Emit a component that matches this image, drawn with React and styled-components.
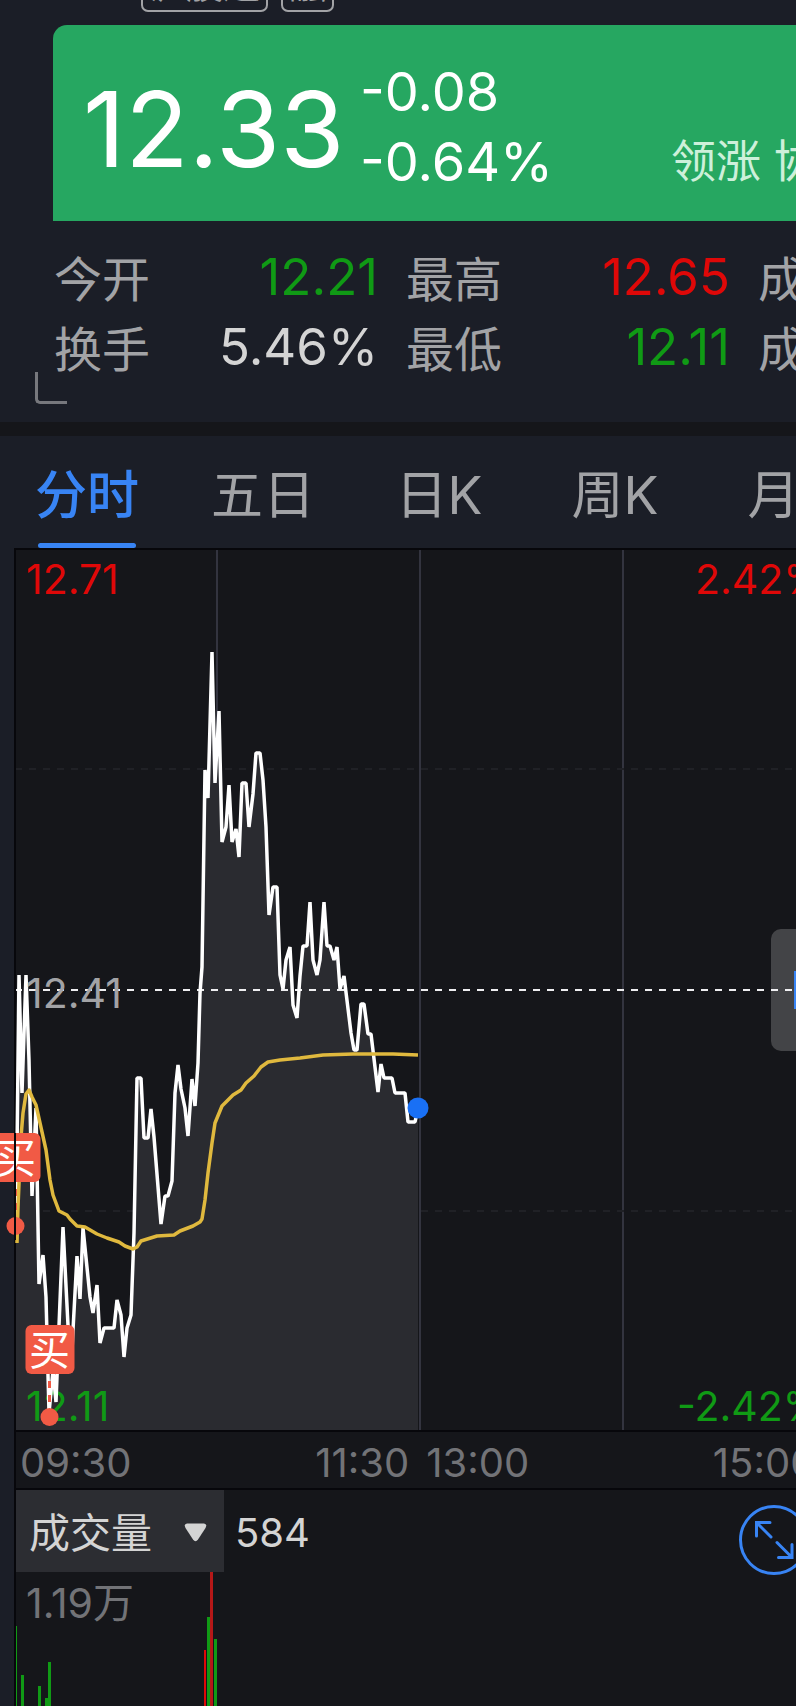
import React from 'react';
import styled, { createGlobalStyle } from 'styled-components';

const GlobalStyle = createGlobalStyle`
  *, *::before, *::after { box-sizing: border-box; }
  body {
    margin: 0;
    background: #1b1e27;
    color: #a2a3a6;
    font-family: Inter, "Noto Sans CJK SC", sans-serif;
    overflow-x: hidden;
  }
  button, select { font: inherit; color: inherit; border: 0; background: none; padding: 0; }
`;

const Page = styled.main`
  width: 100%;
  overflow: hidden;
`;

const TagRow = styled.div`
  display: flex;
  align-items: flex-end;
  gap: 13px;
  height: 12px;
  padding-left: 141px;
  overflow: hidden;
`;

const Tag = styled.span`
  flex: none;
  padding: 0 6px 6px;
  border: 2px solid #a2a3a6;
  border-radius: 7px;
  font-size: 37px;
  line-height: 36px;
`;

const Banner = styled.section`
  display: flex;
  align-items: center;
  height: 196px;
  margin: 13px 0 0 53px;
  padding: 8px 0 0 30px;
  border-top-left-radius: 14px;
  background: #26a761;
  color: #fff;
  overflow: hidden;
  white-space: nowrap;
`;

const Price = styled.strong`
  flex: none;
  width: 277px;
  padding-top: 4px;
  font-size: 104px;
  font-weight: 400;
  line-height: 140px;
`;

const Changes = styled.div`
  display: flex;
  flex: none;
  flex-direction: column;
  width: 311px;
  font-size: 54px;
  line-height: 70px;
`;

const Leader = styled.a`
  align-self: flex-end;
  flex: none;
  padding-bottom: 24px;
  color: #cdf0da;
  font-size: 45px;
  line-height: 70px;
  text-decoration: none;
`;

const Stats = styled.dl`
  display: grid;
  grid-template-columns: 324px 324px 324px;
  column-gap: 28px;
  margin: 0;
  padding: 20px 0 41px 54px;
`;

const Stat = styled.div`
  display: flex;
  align-items: center;
  justify-content: space-between;
  height: 70px;
`;

const StatName = styled.dt`
  font-size: 48px;
`;

const StatValue = styled.dd`
  margin: 0;
  color: ${(p) => p.$color};
  font-size: 51px;
`;

const StatsWrap = styled.section`
  position: relative;
  height: 201px;
`;

const Corner = styled.span`
  position: absolute;
  left: 35px;
  bottom: 18px;
  width: 32px;
  height: 32px;
  border: solid #77787d;
  border-width: 0 0 3px 3px;
  border-bottom-left-radius: 5px;
`;

const Divider = styled.hr`
  height: 14px;
  margin: 0;
  border: 0;
  background: #15161a;
`;

const Tabs = styled.nav`
  display: flex;
  height: 112px;
  margin-left: -1px;
  overflow: hidden;
`;

const Tab = styled.button`
  display: flex;
  flex: 0 0 176px;
  flex-direction: column;
  align-items: center;
  justify-content: space-between;
  padding-top: 24px;
  color: ${(p) => (p.$active ? '#3884f4' : '#a2a3a6')};
  font-size: 52px;
  font-weight: ${(p) => (p.$active ? 500 : 400)};
  line-height: 72px;

  &::after {
    content: '';
    width: 98px;
    height: 5px;
    border-radius: 3px;
    background: ${(p) => (p.$active ? '#3884f4' : 'transparent')};
  }
`;

const ChartFrame = styled.section`
  margin-left: 14px;
  border: solid #07070b;
  border-width: 2px 0 0 2px;
  background: #15161a;
`;

const Plot = styled.div`
  position: relative;
  border-bottom: 2px solid #07070b;
`;

const Drawing = styled.svg`
  display: block;
  width: 100%;
  height: auto;
  overflow: visible;
`;

const SideHandle = styled.button`
  position: absolute;
  top: 379px;
  right: 0;
  display: flex;
  align-items: center;
  justify-content: flex-end;
  width: 25px;
  height: 122px;
  border-radius: 10px 0 0 10px;
  background: rgba(255, 255, 255, 0.2);

  &::after {
    content: '';
    width: 2px;
    height: 38px;
    background: #3884f4;
  }
`;

const TimeAxis = styled.div`
  display: flex;
  justify-content: space-between;
  width: 103%;
  height: 58px;
  padding: 0 4px;
  border-bottom: 2px solid #07070b;
  color: #727377;
  font-size: 40px;
  line-height: 62px;
`;

const Noon = styled.span`
  display: flex;
  gap: 17px;
`;

const VolumeBar = styled.div`
  display: flex;
  align-items: stretch;
  height: 82px;
`;

const Picker = styled.label`
  display: flex;
  flex: none;
  align-items: center;
  justify-content: space-between;
  width: 208px;
  padding: 2px 17px 0 13px;
  background: #2c2d32;
  color: #d4d4d4;
`;

const PickerSelect = styled.select`
  appearance: none;
  width: 130px;
  height: 62px;
  padding-top: 2px;
  font-size: 41px;
  outline: 0;
`;

const VolumeValue = styled.output`
  flex: 1;
  padding-left: 11px;
  color: #d4d4d4;
  font-size: 40px;
  line-height: 86px;
`;

const ExpandButton = styled.button`
  align-self: flex-end;
  flex: none;
  height: 70px;
  margin: 0 -13px -3px 0;

  svg { display: block; }
`;

const VolumePlot = styled.div`
  overflow: hidden;
`;

const ChartText = styled.text`
  font-family: Inter, "Noto Sans CJK SC", sans-serif;
  font-size: 41px;
  fill: ${(p) => p.$color};
`;

const RED = '#df0808';
const GREEN = '#109a15';

const PRICE_LINE = `16,1240 19,975 22,1093 26,975 29,1060 32,1196 36,1108 39,1284 43,1255 46,1297 49,1413 53,1370
56,1402 59,1326 63,1227 68,1325 71,1372 73,1330 77,1256 80,1299 83,1228 90,1297 93,1313 97,1285 100,1343
104,1328 114,1328 117,1300 121,1315 124,1357 127,1328 131,1315 134,1233 137,1078 141,1078 144,1138 148,1138
151,1109 154,1137 161,1224 165,1196 168,1196 172,1181 175,1093 178,1065 181,1089 185,1108 188,1136 192,1079
195,1106 198,1063 200,993 202,967 205,770 208,798 212,652 215,783 219,711 222,842 226,827 229,785 232,842
236,829 239,857 242,783 246,783 249,827 253,794 256,753 260,753 263,780 266,827 269,915 273,887 277,887
280,975 283,989 286,960 290,947 293,1005 297,1018 300,976 303,946 307,946 310,902 313,960 317,975 320,960
324,902 327,946 330,946 334,960 337,947 340,989 344,976 351,1033 354,1050 357,1050 361,1004 364,1004
368,1034 371,1034 378,1092 381,1064 384,1078 392,1078 395,1093 405,1093 408,1122 415,1122 418,1108`;

const AVERAGE_LINE = `17,1243 18,1207 21,1137 23,1113 26,1094 29,1090 32,1097 36,1105 40,1123 46,1150 50,1180 53,1195
59,1211 67,1215 70,1219 77,1226 85,1227 97,1234 107,1238 119,1242 125,1246 133,1249 137,1247 141,1241 157,1236
174,1235 180,1231 193,1226 200,1222 202,1219 205,1200 208,1173 212,1143 215,1123 222,1106 226,1102 233,1095
241,1090 246,1083 254,1076 261,1067 268,1062 280,1060 300,1058 323,1055 353,1054 393,1054 418,1055`;

const VOLUMES = [
  [16, 1, 1626, GREEN], [21, 3, 1675, GREEN], [38, 3, 1686, GREEN], [45, 3, 1698, GREEN], [48, 3, 1662, GREEN],
  [204, 2, 1650, RED], [207, 3, 1617, GREEN], [210, 3, 1572, '#b51818'], [214, 3, 1639, GREEN],
];

const STATS = [
  ['今开', '12.21', GREEN], ['最高', '12.65', RED], ['成交', '', RED],
  ['换手', '5.46%', '#d4d4d4'], ['最低', '12.11', GREEN], ['成交', '', RED],
];

function BuyMarker({ x, top, dot }) {
  return (
    <g>
      <line x1={x} x2={x} y1={top + 49} y2={dot} stroke="#f15a45" strokeWidth="3" strokeDasharray="7 7" strokeDashoffset="7" />
      <rect x={x - 24} y={top} width="49" height="49" rx="6" fill="#f15a45" />
      <ChartText x={x} y={top + 40} $color="#fff" textAnchor="middle">买</ChartText>
      <circle cx={x} cy={dot} r="9" fill="#f15a45" />
    </g>
  );
}

function PriceChart() {
  return (
    <Drawing viewBox="16 550 780 880" role="img" aria-label="分时">
      {[217, 420, 623].map((x) => (
        <line key={x} x1={x} x2={x} y1="550" y2="1430" stroke="#33343f" strokeWidth="2" />
      ))}
      {[769, 1211].map((y) => (
        <line key={y} x1="16" x2="796" y1={y} y2={y} stroke="#202126" strokeWidth="2" strokeDasharray="7 7" strokeDashoffset="1" />
      ))}
      <polygon points={`${PRICE_LINE} 418,1430 16,1430`} fill="#2a2b30" />
      <ChartText x="26" y="1421" $color={GREEN}>12.11</ChartText>
      <line x1="16" x2="796" y1="990" y2="990" stroke="#eeeef0" strokeWidth="2" strokeDasharray="7 7" strokeDashoffset="1" />
      <polyline points={PRICE_LINE} fill="none" stroke="#fff" strokeWidth="3.5" strokeLinejoin="bevel" />
      <ChartText x="26" y="594" $color={RED}>12.71</ChartText>
      <ChartText x="26" y="1008" $color="#a2a3a6">12.41</ChartText>
      <ChartText x="695" y="594" $color={RED}>2.42%</ChartText>
      <ChartText x="677" y="1421" $color={GREEN}>-2.42%</ChartText>
      <polyline points={AVERAGE_LINE} fill="none" stroke="#e0b93e" strokeWidth="3.5" strokeLinejoin="round" />
      <circle cx="418" cy="1108" r="10.5" fill="#1970f5" />
      <BuyMarker x={15.5} top={1133} dot={1226} />
      <line x1="15" x2="15" y1="1133" y2="1240" stroke="#07070b" strokeWidth="2" />
      <BuyMarker x={49.5} top={1325} dot={1417} />
    </Drawing>
  );
}

function VolumeChart() {
  return (
    <Drawing viewBox="16 1572 780 134" role="img" aria-label="成交量">
      <ChartText x="26" y="1618" $color="#727377">1.19万</ChartText>
      {VOLUMES.map(([x, w, y, color]) => (
        <rect key={x} x={x} y={y} width={w} height={1706 - y} fill={color} />
      ))}
    </Drawing>
  );
}

export default function App() {
  return (
    <Page>
      <GlobalStyle />
      <TagRow>
        <Tag>沪股通</Tag>
        <Tag>融</Tag>
      </TagRow>
      <Banner>
        <Price>12.33</Price>
        <Changes>
          <span>-0.08</span>
          <span>-0.64%</span>
        </Changes>
        <Leader href="#leader">领涨 协</Leader>
      </Banner>
      <StatsWrap>
        <Stats>
          {STATS.map(([name, value, color], i) => (
            <Stat key={i}>
              <StatName>{name}</StatName>
              <StatValue $color={color}>{value}</StatValue>
            </Stat>
          ))}
        </Stats>
        <Corner />
      </StatsWrap>
      <Divider />
      <Tabs>
        {['分时', '五日', '日K', '周K', '月K'].map((name, i) => (
          <Tab key={name} type="button" $active={i === 0}>{name}</Tab>
        ))}
      </Tabs>
      <ChartFrame>
        <Plot>
          <PriceChart />
          <SideHandle type="button" aria-label="展开侧栏" />
        </Plot>
        <TimeAxis>
          <span>09:30</span>
          <Noon>
            <span>11:30</span>
            <span>13:00</span>
          </Noon>
          <span>15:00</span>
        </TimeAxis>
        <VolumeBar>
          <Picker>
            <PickerSelect aria-label="指标" defaultValue="成交量">
              <option>成交量</option>
            </PickerSelect>
            <svg width="23" height="19" viewBox="0 0 23 19" aria-hidden="true">
              <path d="M3 0.5H20Q23.500 1 21.500 5L14 16.500Q11.500 20 9 16.500L1.500 5Q-0.500 1 3 0.500Z" fill="#d4d4d4" />
            </svg>
          </Picker>
          <VolumeValue>584</VolumeValue>
          <ExpandButton type="button" aria-label="全屏">
            <svg width="70" height="70" viewBox="0 0 70 70" fill="none" stroke="#3884f4" strokeWidth="3" strokeLinecap="round">
              <circle cx="35" cy="35" r="33.500" />
              <path d="M32 32 17.500 17.500M17.500 31V17.500H31M38 37.500 53 52.500M53 39.500V52.500H39.500" />
            </svg>
          </ExpandButton>
        </VolumeBar>
        <VolumePlot>
          <VolumeChart />
        </VolumePlot>
      </ChartFrame>
    </Page>
  );
}
